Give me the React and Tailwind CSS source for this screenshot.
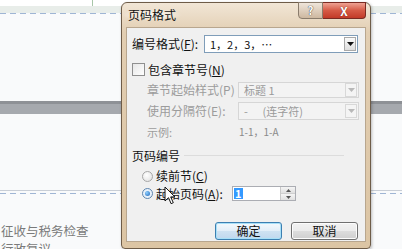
import React from 'react';

const FONT = { fontFamily: '"Noto Sans CJK SC", "Liberation Sans", sans-serif' };

function Dashed({ className = '' }) {
  return (
    <div
      className={`h-px bg-[repeating-linear-gradient(90deg,#9fb5d4_0_6px,transparent_6px_10px)] ${className}`}
    />
  );
}

function DropArrow({ disabled }) {
  return (
    <div
      className={`ml-auto mr-[1px] flex h-[14px] w-[12px] items-center justify-center border ${
        disabled ? 'border-[#d8d8d8] bg-[#f4f4f4]' : 'border-[#a9a9a9] bg-[linear-gradient(#fafafa,#dedede)]'
      }`}
    >
      <svg width="7" height="4" viewBox="0 0 7 4">
        <path d="M0 0h7L3.5 4z" fill={disabled ? '#b8b8b8' : '#111'} />
      </svg>
    </div>
  );
}

function SelectBox({ children, disabled, w = 'w-[154px]', h = 'h-[18px]' }) {
  return (
    <div
      className={`flex shrink-0 items-center border pl-[5px] ${w} ${h} ${
        disabled ? 'border-[#d6d6d6] bg-[#f3f3f3] text-[#9a9a9a]' : 'border-[#7f9db9] bg-white text-[#111]'
      }`}
    >
      <span className="whitespace-nowrap text-[11px] leading-none">{children}</span>
      <DropArrow disabled={disabled} />
    </div>
  );
}

function Key({ k }) {
  return (
    <span>
      (<u>{k}</u>)
    </span>
  );
}

export default function App() {
  return (
    <div className="relative h-[249px] w-[402px] overflow-hidden bg-[#f9fafb]" style={FONT}>
      {/* page behind the dialog */}
      <div className="flex h-[6px]">
        <div className="w-[93px] border-r border-[#a8c6a8] bg-white" />
        <div className="flex-1 bg-white" />
      </div>
      <div className="h-[7px] bg-[#e8ede9]" />
      <Dashed />
      <div className="h-[87px]" />
      <div className="h-[13px] border-t-[3px] border-[#8e9196] bg-[#a6a9ae]" />
      <div className="h-[76px]" />
      <div className="h-px bg-[#c9ced6]" />
      <div className="h-[2px]" />
      <Dashed />
      <div className="pt-[28px] pl-[1px] text-[12.5px] leading-[18px] text-[#7a7a7a]">
        <div>征收与税务检查</div>
        <div>行政复议</div>
      </div>

      {/* dialog window */}
      <div className="absolute left-[121px] top-[2px] h-[247px] w-[250px] rounded-t-[6px] rounded-b-[4px] border border-[#6e5c48] bg-[linear-gradient(180deg,#f1e6d6_0%,#e2ceb2_12%,#dcc5a4_100%)] shadow-[1px_1px_3px_rgba(0,0,0,0.25)]">
        {/* title bar */}
        <div className="relative flex h-[24px] items-center pl-[6px]">
          <div className="-ml-[6px] rounded-full bg-[radial-gradient(closest-side,rgba(255,255,255,0.9),rgba(255,255,255,0))] px-[6px] text-[12px] leading-none text-[#111]">
            页码格式
          </div>
          <div className="absolute right-[4px] top-[-1px] flex">
            <div className="flex h-[17px] w-[25px] items-center justify-center rounded-bl-[4px] border border-[#8a7c6c] bg-[linear-gradient(#efe5da,#cdb8a0)] text-[11px] font-bold leading-none text-white [text-shadow:0_0_1px_#444,0_0_1px_#444]">
              ?
            </div>
            <div className="flex h-[17px] w-[43px] items-center justify-center rounded-br-[4px] border border-l-0 border-[#7a2a22] bg-[linear-gradient(#eea293,#d65a46_50%,#c23a28)] text-[12px] font-bold leading-none text-white [text-shadow:0_0_1px_#5a1010]">
              X
            </div>
          </div>
        </div>

        {/* client area */}
        <div className="mx-[4px] h-[215px] border border-[#b8a68e] bg-[#f0f0f0] text-[12px] leading-none text-[#111]">
          <div className="flex flex-col pl-[5px] pt-[7px]">
            <div className="flex h-[18px] items-center">
              <span className="w-[72px] whitespace-nowrap">
                编号格式<Key k="F" />:
              </span>
              <SelectBox>1，2，3，…</SelectBox>
            </div>

            <div className="mt-[10px] flex h-[13px] items-center">
              <div className="h-[13px] w-[13px] border border-[#8f8f8f] bg-[linear-gradient(135deg,#e6e6e6,#ffffff)]" />
              <span className="ml-[3px] whitespace-nowrap">
                包含章节号<Key k="N" />
              </span>
            </div>

            <div className="mt-[6px] flex h-[16px] items-center text-[#9c9c9c]">
              <span className="w-[106px] whitespace-nowrap pl-[15px]">章节起始样式(P)</span>
              <SelectBox disabled w="w-[121px]" h="h-[16px]">
                标题 1
              </SelectBox>
            </div>

            <div className="mt-[4px] flex h-[18px] items-center text-[#9c9c9c]">
              <span className="w-[106px] whitespace-nowrap pl-[15px]">使用分隔符(E):</span>
              <SelectBox disabled w="w-[121px]">
                -&nbsp;&nbsp;&nbsp;&nbsp;&nbsp;&nbsp;(连字符)
              </SelectBox>
            </div>

            <div className="mt-[7px] flex h-[10px] items-center text-[#9c9c9c]">
              <span className="w-[106px] whitespace-nowrap pl-[15px] text-[11px]">示例:</span>
              <span className="pl-[1px] text-[10px] text-[#8a8a8a]">1-1，1-A</span>
            </div>

            <div className="mt-[12px] flex h-[13px] items-center pr-[21px]">
              <span className="whitespace-nowrap">页码编号</span>
              <div className="ml-[4px] h-px flex-1 bg-[#dcdcdc]" />
            </div>

            <div className="mt-[8px] flex h-[12px] items-center pl-[10px]">
              <div className="h-[11px] w-[11px] rounded-full border border-[#a7a7a7] bg-[radial-gradient(circle_at_40%_35%,#ffffff,#dedede)]" />
              <span className="ml-[3px] whitespace-nowrap">
                续前节<Key k="C" />
              </span>
            </div>

            <div className="mt-[4px] flex h-[15px] items-center pl-[10px]">
              <div className="flex h-[11px] w-[11px] items-center justify-center rounded-full border border-[#5f86ae] bg-[#e8f1fa]">
                <div className="h-[5px] w-[5px] rounded-full bg-[radial-gradient(circle_at_35%_35%,#8fd0ff,#1c64b8)]" />
              </div>
              <span className="ml-[3px] w-[76px] whitespace-nowrap">
                起始页码<Key k="A" />:
              </span>
              <div className="flex h-[15px] w-[64px] items-center border border-[#abadb3] bg-white">
                <span className="ml-[1px] bg-[#3399ff] px-[1px] text-[11px] font-bold text-white">1</span>
                <div className="ml-auto flex h-[13px] w-[15px] flex-col border-l border-[#c9c9c9]">
                  <div className="flex flex-1 items-center justify-center bg-[linear-gradient(#f5f5f5,#e0e0e0)]">
                    <svg width="5" height="3" viewBox="0 0 5 3">
                      <path d="M0 3h5L2.5 0z" fill="#555" />
                    </svg>
                  </div>
                  <div className="flex flex-1 items-center justify-center border-t border-[#cfcfcf] bg-[linear-gradient(#f5f5f5,#e0e0e0)]">
                    <svg width="5" height="3" viewBox="0 0 5 3">
                      <path d="M0 0h5L2.5 3z" fill="#555" />
                    </svg>
                  </div>
                </div>
              </div>
            </div>

            <div className="mt-[21px] flex h-[18px] pl-[83px]">
              <button className="h-[18px] w-[67px] rounded-[3px] border border-[#3c7fb1] bg-[linear-gradient(#f4f9fd,#e2eef8_50%,#cfe2f2_51%,#c0d8ee)] text-[12px] leading-none text-[#111] shadow-[inset_0_0_0_1px_#a8e0f8]">
                确定
              </button>
              <button className="ml-[9px] h-[18px] w-[67px] rounded-[3px] border border-[#707070] bg-[linear-gradient(#f2f2f2,#ebebeb_50%,#dddddd_51%,#cfcfcf)] text-[12px] leading-none text-[#111] shadow-[inset_0_0_0_1px_#fcfcfc]">
                取消
              </button>
            </div>
          </div>
        </div>

        {/* mouse pointer */}
        <svg className="absolute left-[42px] top-[183px]" width="12" height="19" viewBox="0 0 12 19">
          <path d="M1 1v14l3.5-3.3 2.6 6 2.2-1-2.6-5.8H11z" fill="#fff" stroke="#111" strokeWidth="1" strokeLinejoin="round" />
        </svg>
      </div>
    </div>
  );
}
